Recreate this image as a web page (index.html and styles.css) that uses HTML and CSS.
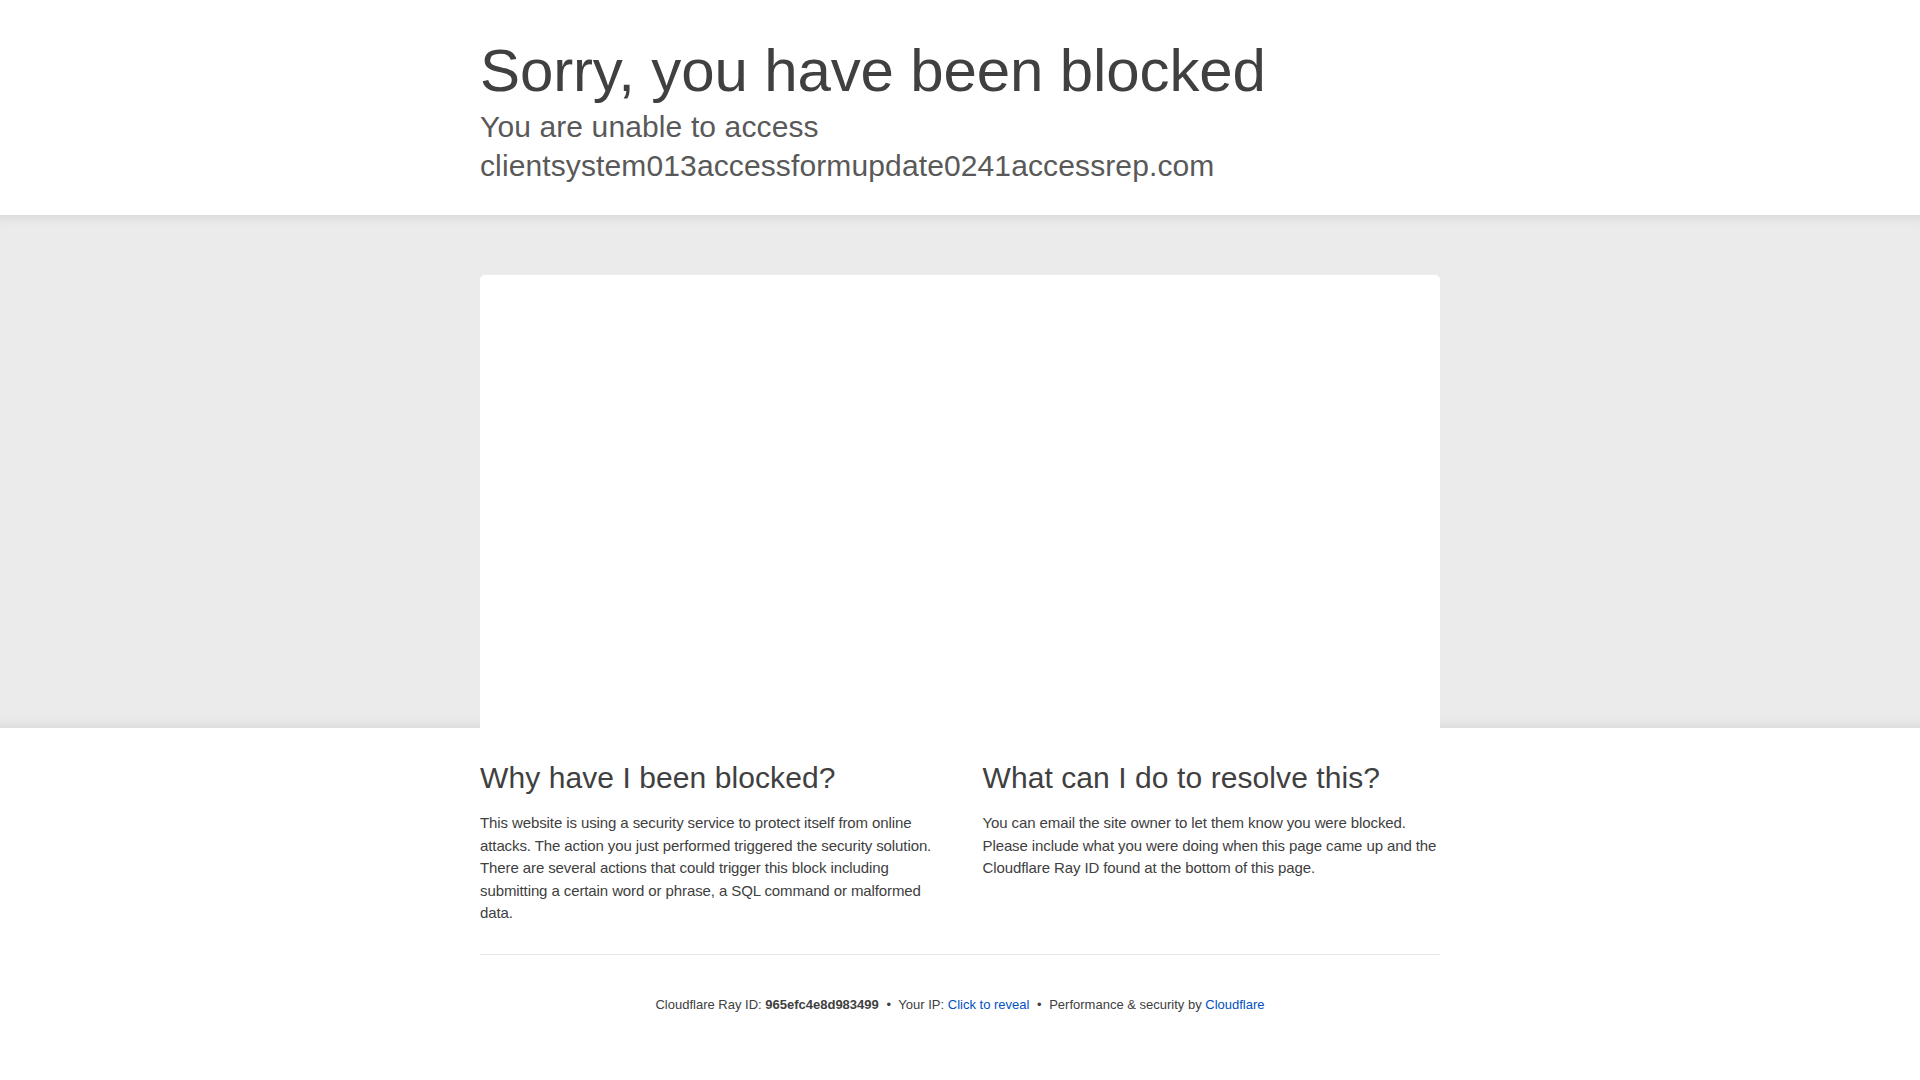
FILE: index.html
```html
<!DOCTYPE html>
<html lang="en-US">
<head>
<meta charset="utf-8">
<title>Attention Required! | Cloudflare</title>
<link rel="stylesheet" href="styles.css">
</head>
<body>
<div class="error-details">
  <header class="overview">
    <div class="wrapper">
      <h1 class="headline">Sorry, you have been blocked</h1>
      <h2 class="subheadline">You are unable to access clientsystem013accessformupdate0241accessrep.com</h2>
    </div>
  </header>

  <section class="highlight">
    <div class="wrapper">
      <div class="screenshot"></div>
    </div>
  </section>

  <section class="wrapper columns-section">
    <div class="columns">
      <div class="column">
        <h2 class="col-title">Why have I been blocked?</h2>
        <p class="col-text">This website is using a security service to protect itself from online attacks. The action you just performed triggered the security solution. There are several actions that could trigger this block including submitting a certain word or phrase, a SQL command or malformed data.</p>
      </div>
      <div class="column">
        <h2 class="col-title">What can I do to resolve this?</h2>
        <p class="col-text">You can email the site owner to let them know you were blocked. Please include what you were doing when this page came up and the Cloudflare Ray ID found at the bottom of this page.</p>
      </div>
    </div>
  </section>

  <footer class="wrapper footer">
    <p class="footer-line">
      <span class="footer-item">Cloudflare Ray ID: <strong class="ray">965efc4e8d983499</strong></span>
      <span class="footer-sep">&bull;</span>
      <span class="footer-item">Your IP: <span class="link">Click to reveal</span></span>
      <span class="footer-sep">&bull;</span>
      <span class="footer-item">Performance &amp; security by <span class="link">Cloudflare</span></span>
    </p>
  </footer>
</div>
</body>
</html>
```

FILE: styles.css
```css
* {
  box-sizing: border-box;
}

html, body {
  margin: 0;
  padding: 0;
  background: #ffffff;
}

body {
  font-family: "Liberation Sans", Arial, Helvetica, sans-serif;
  color: #404040;
  -webkit-font-smoothing: antialiased;
}

.wrapper {
  width: 960px;
  margin: 0 auto;
}

.overview {
  padding: 41px 0 30px;
}

.headline {
  margin: 0 0 6px;
  font-size: 60px;
  line-height: 60px;
  font-weight: 400;
  letter-spacing: -0.13px;
  color: #404040;
}

.subheadline {
  margin: 0;
  font-size: 30px;
  line-height: 39px;
  font-weight: 400;
  letter-spacing: 0.12px;
  color: #595959;
}

.highlight {
  background: #ebebeb;
  padding-top: 60px;
  box-shadow: inset 0 12px 14px -12px rgba(0, 0, 0, 0.12),
              inset 0 -12px 14px -12px rgba(0, 0, 0, 0.12);
}

.screenshot {
  height: 453px;
  background: #ffffff;
  border-radius: 5px 5px 0 0;
}

.columns-section {
  padding-top: 30px;
}

.columns {
  display: flex;
  margin: 0 -22.5px;
  padding-bottom: 29.5px;
}

.column {
  width: 50%;
  padding: 0 22.5px;
}

.col-title {
  margin: 0;
  font-size: 30px;
  line-height: 39px;
  font-weight: 400;
  letter-spacing: 0.08px;
  color: #404040;
}

.col-text {
  margin: 15px 0 0;
  font-size: 15px;
  line-height: 22.5px;
  letter-spacing: -0.1px;
  color: #404040;
}

.footer {
  border-top: 1px solid #e6e6e6;
  padding: 40px 0;
  text-align: center;
}

.footer-line {
  margin: 0;
  font-size: 13px;
  line-height: 19.5px;
  color: #404040;
}

.ray {
  font-weight: 700;
}

.footer-sep {
  padding: 0 4px;
}

.link {
  color: #0051c3;
}
```
